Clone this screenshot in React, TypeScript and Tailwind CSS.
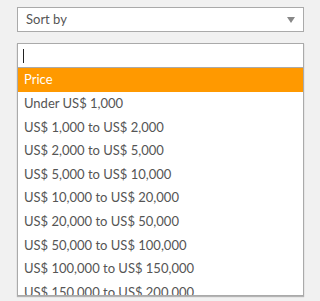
import React from "react";

const options = [
  "Under US$ 1,000",
  "US$ 1,000 to US$ 2,000",
  "US$ 2,000 to US$ 5,000",
  "US$ 5,000 to US$ 10,000",
  "US$ 10,000 to US$ 20,000",
  "US$ 20,000 to US$ 50,000",
  "US$ 50,000 to US$ 100,000",
  "US$ 100,000 to US$ 150,000",
  "US$ 150,000 to US$ 200,000",
];

const App = () => {
  return (
    <div
      className="h-[301px] w-[320px] overflow-hidden bg-[#f1f1f1] pt-[7px] pl-[17px] text-[13px] text-[#555]"
      style={{ fontFamily: "Lato, 'Open Sans', sans-serif" }}
    >
      {/* Select */}
      <div className="flex h-[25px] w-[287px] items-center justify-between border border-[#aaa] bg-white pl-[8px] pr-[8px]">
        <span className="leading-none">Sort by</span>
        <span className="h-0 w-0 border-x-[4px] border-t-[6px] border-x-transparent border-t-[#888]" />
      </div>

      {/* Dropdown */}
      <div className="mt-[11px] h-[253px] w-[287px] overflow-hidden border border-[#aaa] bg-white shadow-[0_1px_1px_rgba(0,0,0,0.25)]">
        <div className="flex h-[24px] items-center border-b border-[#aaa] pl-[5px]">
          <span className="h-[14px] w-[1px] bg-[#222]" />
        </div>
        <div className="flex h-[24px] items-center bg-[#ff9900] pl-[6px] text-white">
          Price
        </div>
        {options.map((o) => (
          <div key={o} className="flex h-[23.6px] shrink-0 items-center pl-[6px] whitespace-nowrap">
            {o}
          </div>
        ))}
      </div>
    </div>
  );
};

export default App;
